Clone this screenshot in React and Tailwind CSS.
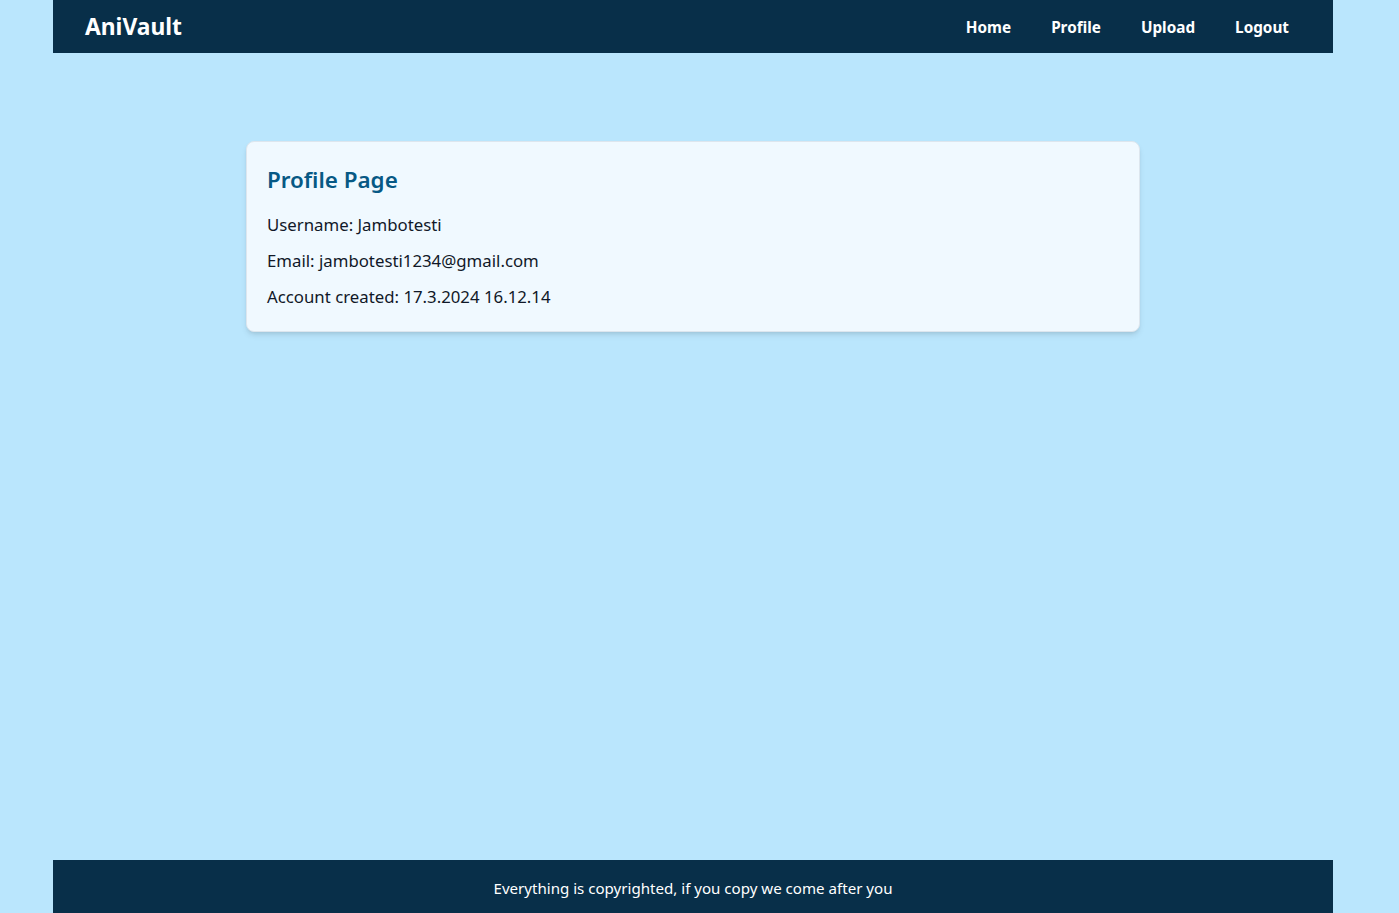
export default function App() {
  return (
    <div
      className="w-full h-[913px] overflow-hidden bg-[#bae6fd]"
      style={{ fontFamily: '"Noto Sans", "Open Sans", sans-serif' }}
    >
      <div className="w-[1386px] flex flex-col">
        <header className="mx-auto w-[1280px] h-[53px] bg-[#082f49] flex items-center justify-between pl-8 pr-6">
          <h1 className="text-[22.8px] font-bold text-white pt-[2px]">AniVault</h1>
          <nav className="flex items-center pt-[1px]">
            {["Home", "Profile", "Upload", "Logout"].map((item) => (
              <a key={item} href="#" className="px-5 text-white font-bold text-[15.3px]">
                {item}
              </a>
            ))}
          </nav>
        </header>

        <main className="h-[807px]">
          <div className="mx-auto mt-[88px] w-[894px] bg-[#f0f9ff] rounded-lg border border-[#dde6ee] shadow-md px-5 pt-[22px] pb-5">
            <h2 className="text-[22.4px] leading-8 font-semibold text-[#075985] mb-[15px]">Profile Page</h2>
            <div className="space-y-2 text-[16.8px] leading-7 text-gray-900">
              <p>Username: Jambotesti</p>
              <p>Email: jambotesti1234@gmail.com</p>
              <p>Account created: 17.3.2024 16.12.14</p>
            </div>
          </div>
        </main>

        <footer className="mx-auto w-[1280px] h-[60px] bg-[#082f49] pt-4 text-center text-white text-[15.1px] leading-6">
          Everything is copyrighted, if you copy we come after you
        </footer>
      </div>
    </div>
  );
}
